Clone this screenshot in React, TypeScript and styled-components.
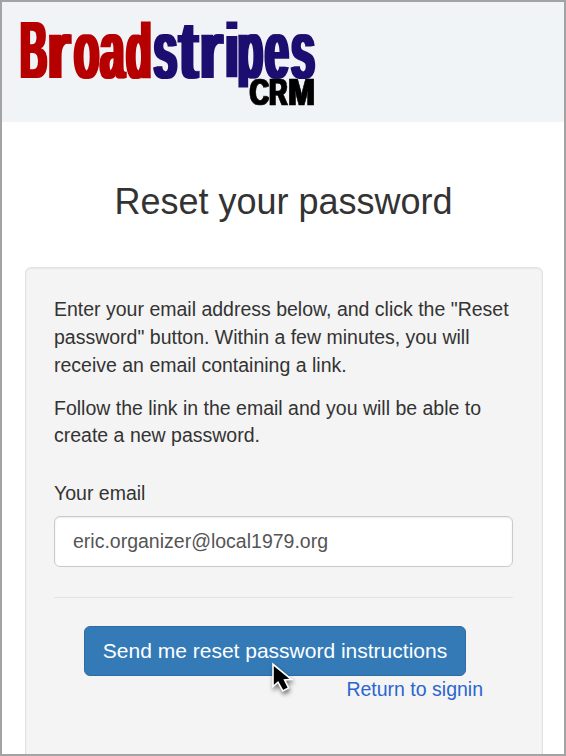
import React from "react";
import styled, { createGlobalStyle } from "styled-components";

const GlobalStyle = createGlobalStyle`
  *, *::before, *::after { box-sizing: border-box; }
  html, body { margin: 0; padding: 0; }
  body {
    overflow: hidden;
    background: #fff;
    color: #333;
    font-family: "Liberation Sans", Arial, Helvetica, sans-serif;
    font-size: 19.5px;
    line-height: 27.8px;
  }
`;

const Page = styled.div`
  display: flex;
  flex-direction: column;
  width: 566px;
  height: 756px;
  overflow: hidden;
  border: 2px solid #a3a3a3;
  background: #fff;
`;

const Header = styled.header`
  flex: none;
  height: 120px;
  background: #f0f4f7;
`;

const LogoDrawing = styled.svg`
  display: block;
  font-family: "Liberation Sans", Arial, sans-serif;
  font-weight: 700;
`;

const Title = styled.h1`
  flex: none;
  margin: 60px 0 45px;
  padding-left: 1px;
  font-size: 36px;
  font-weight: 400;
  line-height: 40px;
  text-align: center;
`;

const Well = styled.form`
  flex: 1 0 500px;
  margin: 0 21px 0 23px;
  padding: 28px 29px 0 28px;
  border: 1px solid #e1e1e1;
  border-radius: 6px;
  background: #f4f4f4;
  box-shadow: inset 0 1px 2px rgba(0, 0, 0, 0.06);
`;

const Paragraph = styled.p`
  margin: 0 0 15.2px;
`;

const Label = styled.label`
  display: block;
  margin: 29.6px 0 8.2px;
`;

const EmailInput = styled.input`
  display: block;
  width: 100%;
  height: 51px;
  padding: 0 18px;
  border: 1px solid #c9c9c9;
  border-radius: 6px;
  outline: none;
  background: #fff;
  box-shadow: inset 0 1px 2px rgba(0, 0, 0, 0.08);
  color: #555;
  font: inherit;
`;

const Divider = styled.hr`
  height: 1px;
  margin: 30px 0 28px;
  border: 0;
  background: #e3e3e3;
`;

const Actions = styled.div`
  display: flex;
  flex-direction: column;
  align-items: flex-start;
  padding: 0 30px;
`;

const SubmitButton = styled.button`
  position: relative;
  width: 382px;
  height: 50px;
  padding: 0;
  border: 1px solid #2e6da4;
  border-radius: 6px;
  background: #337ab7;
  color: #fff;
  font-family: inherit;
  font-size: 21px;
  white-space: nowrap;
`;

const Pointer = styled.svg`
  position: absolute;
  left: 182px;
  top: 32.5px;
  overflow: visible;
  filter: drop-shadow(1px 3px 2px rgba(0, 0, 0, 0.5));
`;

const SigninLink = styled.a`
  align-self: flex-end;
  color: #2a65d0;
  text-decoration: none;
`;

type Glyph = { char: string; x: number; width: number; size?: number };

const broad: Glyph[] = [
  { char: "B", x: 20.3, width: 26.8 },
  { char: "r", x: 47, width: 23.6 },
  { char: "o", x: 74, width: 25.2 },
  { char: "a", x: 100, width: 24.5 },
  { char: "d", x: 126, width: 25.6 },
];

const stripes: Glyph[] = [
  { char: "s", x: 153.5, width: 23.8 },
  { char: "t", x: 178.8, width: 19.6 },
  { char: "r", x: 199.2, width: 23.6 },
  { char: "i", x: 224.8, width: 14.2, size: 78 },
  { char: "p", x: 237.4, width: 25.6 },
  { char: "e", x: 264.8, width: 24 },
  { char: "s", x: 291, width: 24 },
];

const crm: Glyph[] = [
  { char: "C", x: 249.8, width: 19.2 },
  { char: "R", x: 269.2, width: 18.1 },
  { char: "M", x: 288.2, width: 26.6 },
];

function Glyphs({ glyphs }: { glyphs: Glyph[] }) {
  return glyphs.map(({ char, x, width, size }) => (
    <tspan key={x} x={x} fontSize={size} textLength={width} lengthAdjust="spacingAndGlyphs">
      {char}
    </tspan>
  ));
}

function Logo() {
  return (
    <LogoDrawing width="330" height="120" viewBox="2 2 330 120" role="img" aria-label="Broadstripes CRM">
      <defs>
        <filter id="heavy" filterUnits="userSpaceOnUse" x="0" y="0" width="332" height="122">
          <feMorphology operator="dilate" radius="2 0" />
        </filter>
        <filter id="bold" filterUnits="userSpaceOnUse" x="0" y="0" width="332" height="122">
          <feMorphology operator="dilate" radius="1 0" />
        </filter>
        <clipPath id="band">
          <rect x="0" y="21.5" width="332" height="66" />
        </clipPath>
      </defs>
      <g clipPath="url(#band)">
        <g filter="url(#heavy)" fontSize="82">
          <text y="77.7" fill="#b60000">
            <Glyphs glyphs={broad} />
          </text>
          <text y="77.7" fill="#1f0f70">
            <Glyphs glyphs={stripes} />
          </text>
        </g>
      </g>
      <text y="105" fill="#000" stroke="#000" strokeWidth="0.7" fontSize="36" filter="url(#bold)">
        <Glyphs glyphs={crm} />
      </text>
    </LogoDrawing>
  );
}

export default function App() {
  return (
    <>
      <GlobalStyle />
      <Page>
        <Header>
          <Logo />
        </Header>
        <Title>Reset your password</Title>
        <Well onSubmit={(event) => event.preventDefault()}>
          <Paragraph>
            Enter your email address below, and click the "Reset password" button. Within a few minutes, you will
            receive an email containing a link.
          </Paragraph>
          <Paragraph>Follow the link in the email and you will be able to create a new password.</Paragraph>
          <Label htmlFor="email">Your email</Label>
          <EmailInput id="email" type="text" defaultValue="eric.organizer@local1979.org" />
          <Divider />
          <Actions>
            <SubmitButton type="submit">
              Send me reset password instructions
              <Pointer width="30" height="34" viewBox="0 0 30 34" aria-hidden="true">
                <path
                  d="M6 5.3 L6 27.6 L11 23.2 L15.8 31.9 L21.6 29 L17.6 20.9 L24.4 20.4 Z"
                  fill="#000"
                  stroke="#fff"
                  strokeWidth="1.6"
                />
              </Pointer>
            </SubmitButton>
            <SigninLink href="#">Return to signin</SigninLink>
          </Actions>
        </Well>
      </Page>
    </>
  );
}
